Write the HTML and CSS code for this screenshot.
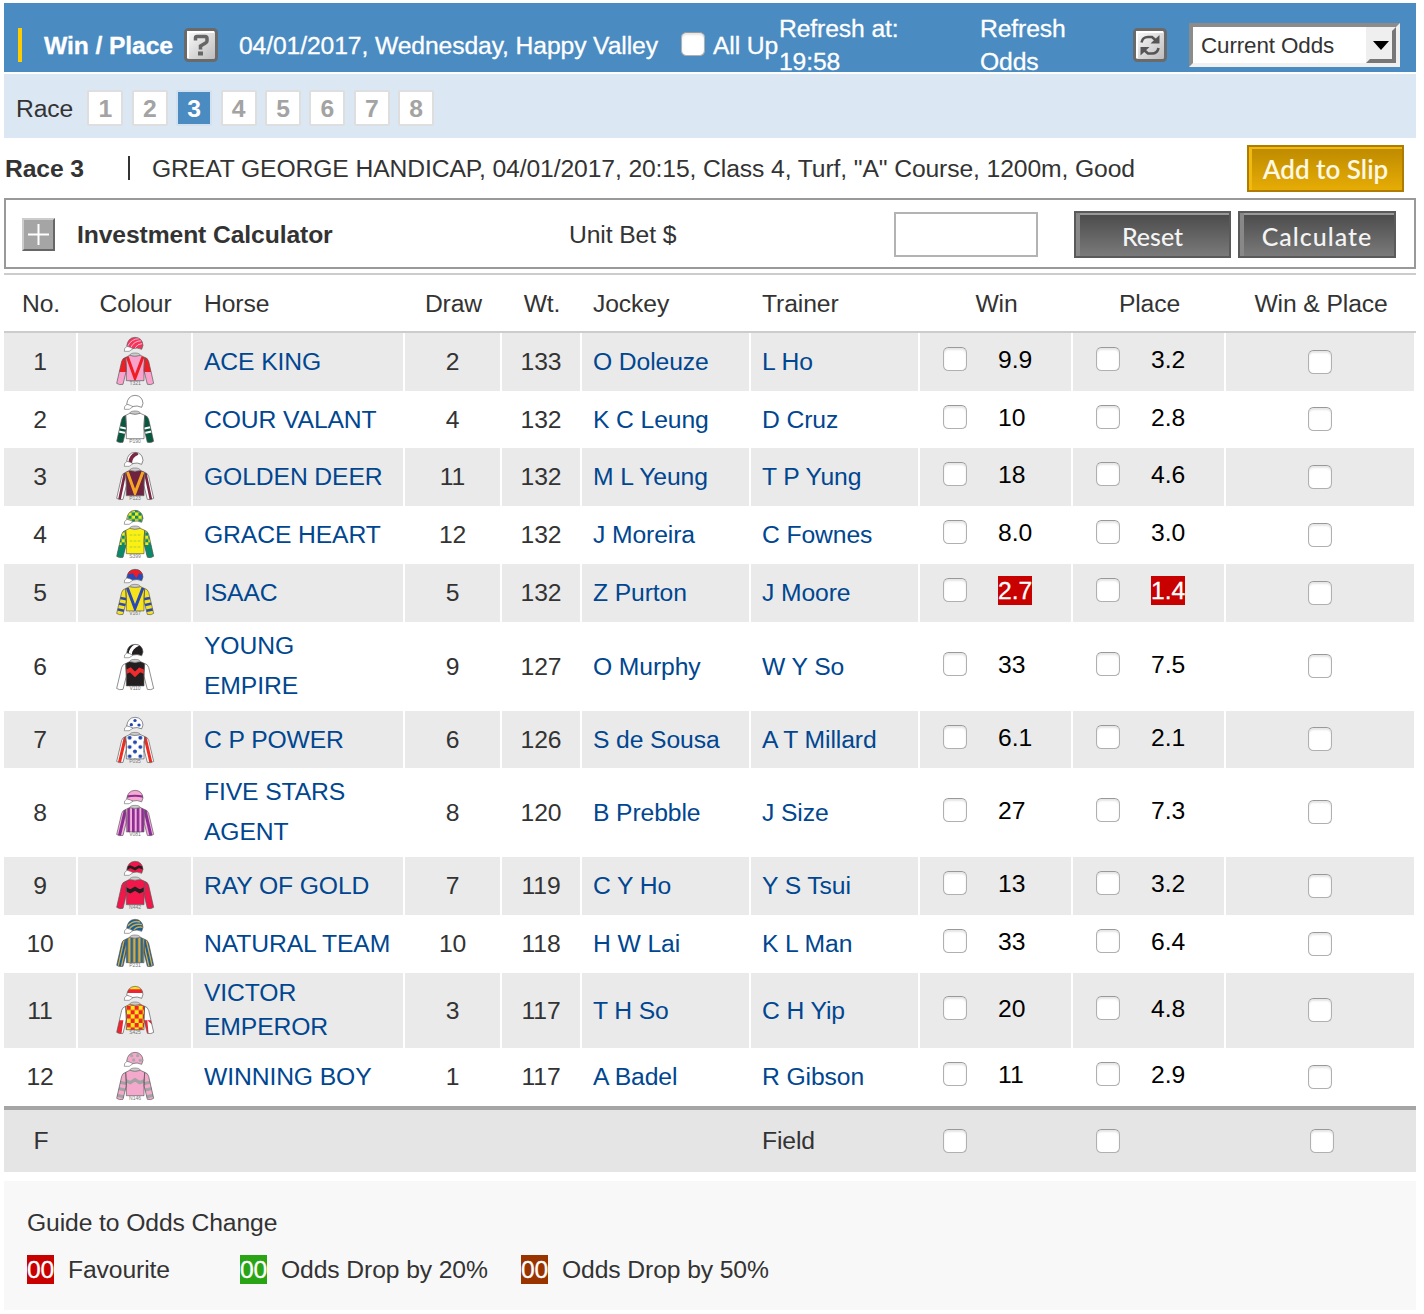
FILE: index.html
```html
<!DOCTYPE html>
<html lang="en">
<head>
<meta charset="utf-8">
<title>Win / Place</title>
<link rel="stylesheet" href="styles.css">
</head>
<body>
<svg class="defs" width="0" height="0" aria-hidden="true">
  <defs>
    <path id="p-body" d="M44 58L32 64L34 92L34 134L87 134L87 92L89 64L76 58Q60 63 44 58Z"/>
    <path id="p-left" d="M32 64Q23 66 20 76L5 142Q13 148 24 145L34 104Z"/>
    <path id="p-right" d="M89 64Q98 66 101 76L116 142Q108 148 97 145L87 104Z"/>
    <path id="p-cap" d="M35 31Q38 5 60 4Q82 5 84 28L80 40Q68 33 50 38Q42 33 35 31Z"/>
    <clipPath id="body"><use href="#p-body"/></clipPath>
    <clipPath id="left"><use href="#p-left"/></clipPath>
    <clipPath id="right"><use href="#p-right"/></clipPath>
    <clipPath id="arms"><use href="#p-left"/><use href="#p-right"/></clipPath>
    <clipPath id="cap"><use href="#p-cap"/></clipPath>
    <g id="outline" stroke="#555" stroke-width="2" fill="none" stroke-linejoin="round">
      <use href="#p-cap"/><use href="#p-left"/><use href="#p-right"/><use href="#p-body"/>
      <path fill="#fff" stroke="#777" d="M36 31Q26 36 28 46Q44 50 54 38Q46 33 36 31Z"/>
      <path fill="#ccc" stroke="#777" d="M44 58Q46 51 60 51Q74 51 76 58Q60 63 44 58Z"/>
    </g>
    <pattern id="check-green" width="20" height="20" patternUnits="userSpaceOnUse"><path fill="#f6ea14" d="M0 0h20v20H0z"/><path fill="#0b8a6b" d="M0 0h10v10H0zM10 10h10v10H10z"/></pattern>
    <pattern id="check-red" x="35" y="62" width="24" height="26" patternUnits="userSpaceOnUse"><path fill="#ffe814" d="M0 0h24v26H0z"/><path fill="#f0232c" d="M0 0h12v13H0zM12 13h12v13H12z"/></pattern>
    <pattern id="dots" x="34" y="60" width="32" height="29" patternUnits="userSpaceOnUse"><path fill="#fff" d="M0 0h32v29H0z"/><g fill="#2447b0"><circle cx="10" cy="8" r="6"/><circle cx="26" cy="22" r="6"/></g></pattern>
    <pattern id="stripe-purple" x="37" width="14" height="14" patternUnits="userSpaceOnUse"><path fill="#f4b0dc" d="M0 0h14v14H0z"/><path fill="#8c2d93" d="M0 0h8v14H0z"/></pattern>
    <pattern id="stripe-gold" x="34" width="15" height="15" patternUnits="userSpaceOnUse"><path fill="#15609c" d="M0 0h15v15H0z"/><path fill="#dba83c" d="M5 0h8v15H5z"/></pattern>
  </defs>
</svg>

<main class="page">
  <header class="topbar">
    <span class="accent"></span>
    <h1 class="title">Win / Place</h1>
    <svg class="tool" viewBox="0 0 34 34"><use href="#tool-frame"/>
      <defs>
        <linearGradient id="metal" x2="1" y2="1"><stop offset="0" stop-color="#fff"/><stop offset="1" stop-color="#b9b9b9"/></linearGradient>
        <g id="tool-frame"><rect x="1.500" y="1.500" width="31" height="31" rx="3" fill="url(#metal)" stroke="#6a6a6a" stroke-width="3"/><path d="M4 30V4h26" fill="none" stroke="#fff" stroke-width="2"/></g>
      </defs>
      <path d="M11.500 12.500V10q0-1.500 1.500-1.500h8q2 0 2 2v2.500q0 1.500-1.500 2L16.500 18v3.500" fill="none" stroke="#666" stroke-width="3.500"/><path fill="#666" d="M14 23.500h5v4h-5z"/>
    </svg>
    <span class="meeting">04/01/2017, Wednesday, Happy Valley</span>
    <input type="checkbox" class="box" aria-label="All Up"><span class="allup">All Up</span>
    <span class="refresh-time">Refresh at:<br>19:58</span>
    <span class="refresh-odds">Refresh<br>Odds</span>
    <svg class="tool" viewBox="0 0 34 34"><use href="#tool-frame"/>
      <g fill="none" stroke="#555" stroke-width="2.600"><path d="M8.500 14.500Q9.500 9 15 9H19L23 12.500"/><path d="M25.500 20Q24.500 25.500 19 25.500H15L11 22"/></g>
      <path fill="#555" d="M26.500 7v8.500H17.500zM7.500 27.500V19H16.500z"/>
    </svg>
    <div class="select"><span>Current Odds</span><span class="select-btn"><svg width="16" height="9" viewBox="0 0 16 9"><path d="M0 0h16L8 9z"/></svg></span></div>
  </header>

  <nav class="races">
    <span class="races-label">Race</span>
    <a class="race">1</a><a class="race">2</a><a class="race current">3</a><a class="race">4</a><a class="race">5</a><a class="race">6</a><a class="race">7</a><a class="race">8</a>
  </nav>

  <section class="info">
    <strong class="info-no">Race 3</strong><span class="info-rule"></span>
    <span class="info-text">GREAT GEORGE HANDICAP, 04/01/2017, 20:15, Class 4, Turf, "A" Course, 1200m, Good</span>
    <button class="btn gold">Add to Slip</button>
  </section>

  <section class="calc">
    <span class="plus"><svg width="21" height="21" viewBox="0 0 21 21"><path d="M10.500 0v21M0 10.500h21" stroke="#fff" stroke-width="2"/></svg></span>
    <strong class="calc-title">Investment Calculator</strong>
    <label class="calc-unit" for="unit">Unit Bet $</label>
    <input id="unit" class="unit-input" type="text">
    <button class="btn grey">Reset</button>
    <button class="btn grey calculate">Calculate</button>
  </section>

  <table class="odds">
    <colgroup><col class="c-no"><col class="c-colour"><col class="c-horse"><col class="c-draw"><col class="c-wt"><col class="c-name"><col class="c-name"><col class="c-win"><col class="c-place"><col class="c-wp"></colgroup>
    <thead>
      <tr><th>No.</th><th>Colour</th><th class="l">Horse</th><th>Draw</th><th>Wt.</th><th class="l">Jockey</th><th class="l">Trainer</th><th>Win</th><th>Place</th><th>Win &amp; Place</th></tr>
    </thead>
    <tbody>
      <tr class="alt h58"><td>1</td>
        <td><svg class="silk" viewBox="0 3 120 147" preserveAspectRatio="none"><g clip-path="url(#cap)"><path fill="#f5365c" d="M20 0h80v50H20z"/><path d="M38 30Q50 8 72 8M48 34Q56 15 80 14M60 36Q66 24 84 22" fill="none" stroke="#ffb9cf" stroke-width="3"/></g><g clip-path="url(#arms)"><path fill="#f01d25" d="M0 60h120v50H0z"/><path fill="#f8a2cc" d="M0 108h120v45H0z"/></g><g clip-path="url(#body)"><path fill="#f8a2cc" d="M30 55h60v85H30z"/><path d="M37 62L60 126L84 62" fill="none" stroke="#f01d25" stroke-width="9"/></g><use href="#outline"/><text x="60" y="148">T321</text></svg></td>
        <td class="l link">ACE KING</td><td>2</td><td>133</td><td class="l link">O Doleuze</td><td class="l link">L Ho</td>
        <td class="pick"><input type="checkbox" class="box"><b>9.9</b></td><td class="pick"><input type="checkbox" class="box"><b>3.2</b></td><td><input type="checkbox" class="box"></td></tr>
      <tr class="h57"><td>2</td>
        <td><svg class="silk" viewBox="0 3 120 147" preserveAspectRatio="none"><use href="#p-cap" fill="#fff"/><g clip-path="url(#arms)"><path fill="#07583f" d="M0 60h120v90H0z"/><path d="M8 98l28 6M8 112l28 6M113 98l-28 6M113 112l-28 6" stroke="#fff" stroke-width="6"/></g><use href="#p-body" fill="#fff"/><use href="#outline"/><text x="60" y="148">P190</text></svg></td>
        <td class="l link">COUR VALANT</td><td>4</td><td>132</td><td class="l link">K C Leung</td><td class="l link">D Cruz</td>
        <td class="pick"><input type="checkbox" class="box"><b>10</b></td><td class="pick"><input type="checkbox" class="box"><b>2.8</b></td><td><input type="checkbox" class="box"></td></tr>
      <tr class="alt h58"><td>3</td>
        <td><svg class="silk" viewBox="0 3 120 147" preserveAspectRatio="none"><g clip-path="url(#cap)"><path fill="#fff" d="M20 0h80v50H20z"/><path d="M46 38Q44 16 68 6" fill="none" stroke="#7c2746" stroke-width="11"/></g><g clip-path="url(#arms)"><path fill="#fff" d="M0 60h120v90H0z"/><path d="M30 66L13 147M91 66L108 147" stroke="#7c2746" stroke-width="8"/></g><g clip-path="url(#body)"><path fill="#6f2340" d="M30 55h60v85H30z"/><path d="M37 62L60 126L84 62" fill="none" stroke="#f5a623" stroke-width="9"/></g><use href="#outline"/><text x="60" y="148">P123</text></svg></td>
        <td class="l link">GOLDEN DEER</td><td>11</td><td>132</td><td class="l link">M L Yeung</td><td class="l link">T P Yung</td>
        <td class="pick"><input type="checkbox" class="box"><b>18</b></td><td class="pick"><input type="checkbox" class="box"><b>4.6</b></td><td><input type="checkbox" class="box"></td></tr>
      <tr class="h58"><td>4</td>
        <td><svg class="silk" viewBox="0 3 120 147" preserveAspectRatio="none"><use href="#p-cap" fill="url(#check-green)"/><g clip-path="url(#arms)"><path fill="url(#check-green)" d="M0 60h120v90H0z"/><path fill="#0b8a6b" d="M0 108h120v45H0z"/></g><use href="#p-body" fill="#faf014"/><path d="M44 78h8M56 78h8M68 78h8M44 96h8M56 96h8M68 96h8M44 114h8M56 114h8M68 114h8" stroke="#a8cf3a" stroke-width="3"/><use href="#outline"/><text x="60" y="148">S399</text></svg></td>
        <td class="l link">GRACE HEART</td><td>12</td><td>132</td><td class="l link">J Moreira</td><td class="l link">C Fownes</td>
        <td class="pick"><input type="checkbox" class="box"><b>8.0</b></td><td class="pick"><input type="checkbox" class="box"><b>3.0</b></td><td><input type="checkbox" class="box"></td></tr>
      <tr class="alt h58"><td>5</td>
        <td><svg class="silk short" viewBox="0 3 120 147" preserveAspectRatio="none"><g clip-path="url(#cap)"><path fill="#2a48b8" d="M20 0h80v50H20z"/><path fill="#ee1c25" d="M36 4h46l2 18-12-6-8 16-10-16-16 4z"/></g><g clip-path="url(#arms)"><path fill="#f7e31b" d="M0 60h120v90H0z"/><path d="M8 92l28 6M6 110l28 6M2 128l28 6M113 92l-28 6M115 110l-28 6M119 128l-28 6" stroke="#2a48b8" stroke-width="8"/></g><g clip-path="url(#body)"><path fill="#f7e31b" d="M30 55h60v85H30z"/><path d="M37 62L60 126L84 62" fill="none" stroke="#2a48b8" stroke-width="9"/></g><use href="#outline"/><text x="60" y="148">V167</text></svg></td>
        <td class="l link">ISAAC</td><td>5</td><td>132</td><td class="l link">Z Purton</td><td class="l link">J Moore</td>
        <td class="pick"><input type="checkbox" class="box"><b class="fav">2.7</b></td><td class="pick"><input type="checkbox" class="box"><b class="fav">1.4</b></td><td><input type="checkbox" class="box"></td></tr>
      <tr class="h89"><td>6</td>
        <td><svg class="silk short low" viewBox="0 3 120 147" preserveAspectRatio="none"><g clip-path="url(#cap)"><path fill="#231f20" d="M20 0h80v50H20z"/><path d="M46 38Q44 16 70 4" fill="none" stroke="#fff" stroke-width="10"/></g><g fill="#fff"><use href="#p-left"/><use href="#p-right"/></g><g clip-path="url(#body)"><path fill="#231f20" d="M30 55h60v85H30z"/><path d="M30 92L46 84L60 98L74 84L92 92" fill="none" stroke="#ef2b2d" stroke-width="13"/></g><use href="#outline"/><text x="60" y="148">V110</text></svg></td>
        <td class="l link tall">YOUNG<br>EMPIRE</td><td>9</td><td>127</td><td class="l link">O Murphy</td><td class="l link">W Y So</td>
        <td class="pick"><input type="checkbox" class="box"><b>33</b></td><td class="pick"><input type="checkbox" class="box"><b>7.5</b></td><td><input type="checkbox" class="box"></td></tr>
      <tr class="alt h57"><td>7</td>
        <td><svg class="silk short low" viewBox="0 3 120 147" preserveAspectRatio="none"><use href="#p-cap" fill="#fff"/><g fill="#2447b0"><circle cx="60" cy="14" r="5"/><circle cx="49" cy="27" r="5"/><circle cx="72" cy="28" r="5"/></g><g clip-path="url(#arms)"><path fill="#fff" d="M0 60h120v90H0z"/><path d="M31 66L13 147M90 66L108 147" stroke="#ef2b20" stroke-width="9"/></g><use href="#p-body" fill="url(#dots)"/><use href="#outline"/><text x="60" y="148">P035</text></svg></td>
        <td class="l link">C P POWER</td><td>6</td><td>126</td><td class="l link">S de Sousa</td><td class="l link">A T Millard</td>
        <td class="pick"><input type="checkbox" class="box"><b>6.1</b></td><td class="pick"><input type="checkbox" class="box"><b>2.1</b></td><td><input type="checkbox" class="box"></td></tr>
      <tr class="h89"><td>8</td>
        <td><svg class="silk short low" viewBox="0 3 120 147" preserveAspectRatio="none"><g clip-path="url(#cap)"><path fill="#f6a9d2" d="M20 0h80v50H20z"/><path d="M34 24Q60 18 86 24" fill="none" stroke="#8c2d93" stroke-width="7"/></g><g clip-path="url(#arms)"><path fill="#f4b0dc" d="M0 60h120v90H0z"/><path d="M31 66L13 147M90 66L108 147" stroke="#8c2d93" stroke-width="9"/></g><use href="#p-body" fill="url(#stripe-purple)"/><use href="#outline"/><text x="60" y="148">V081</text></svg></td>
        <td class="l link tall">FIVE STARS<br>AGENT</td><td>8</td><td>120</td><td class="l link">B Prebble</td><td class="l link">J Size</td>
        <td class="pick"><input type="checkbox" class="box"><b>27</b></td><td class="pick"><input type="checkbox" class="box"><b>7.3</b></td><td><input type="checkbox" class="box"></td></tr>
      <tr class="alt h58"><td>9</td>
        <td><svg class="silk" viewBox="0 3 120 147" preserveAspectRatio="none"><g clip-path="url(#cap)"><path fill="#f2174b" d="M20 0h80v50H20z"/><path d="M32 26L46 20L60 27L72 20L88 26" fill="none" stroke="#231f20" stroke-width="8"/></g><g fill="#f2174b"><use href="#p-left"/><use href="#p-right"/></g><g clip-path="url(#body)"><path fill="#f2174b" d="M30 55h60v85H30z"/><path d="M30 86L46 94L60 86L74 94L92 86" fill="none" stroke="#231f20" stroke-width="11"/></g><use href="#outline"/><text x="60" y="148">N442</text></svg></td>
        <td class="l link">RAY OF GOLD</td><td>7</td><td>119</td><td class="l link">C Y Ho</td><td class="l link">Y S Tsui</td>
        <td class="pick"><input type="checkbox" class="box"><b>13</b></td><td class="pick"><input type="checkbox" class="box"><b>3.2</b></td><td><input type="checkbox" class="box"></td></tr>
      <tr class="h58"><td>10</td>
        <td><svg class="silk" viewBox="0 3 120 147" preserveAspectRatio="none"><g clip-path="url(#cap)"><path fill="#15609c" d="M20 0h80v50H20z"/><path d="M38 24Q54 6 76 12M42 34Q56 14 84 20M56 38Q64 24 84 28" fill="none" stroke="#c9aa55" stroke-width="4"/></g><g clip-path="url(#arms)"><path fill="#15609c" d="M0 60h120v90H0z"/><path d="M27 66L9 147M35 76L19 147M94 66L112 147M86 76L102 147" stroke="#dba83c" stroke-width="4"/></g><use href="#p-body" fill="url(#stripe-gold)"/><use href="#outline"/><text x="60" y="148">P231</text></svg></td>
        <td class="l link">NATURAL TEAM</td><td>10</td><td>118</td><td class="l link">H W Lai</td><td class="l link">K L Man</td>
        <td class="pick"><input type="checkbox" class="box"><b>33</b></td><td class="pick"><input type="checkbox" class="box"><b>6.4</b></td><td><input type="checkbox" class="box"></td></tr>
      <tr class="alt h75"><td>11</td>
        <td><svg class="silk" viewBox="0 3 120 147" preserveAspectRatio="none"><g clip-path="url(#cap)"><path fill="#fff" d="M20 0h80v50H20z"/><path fill="#ffe114" d="M20 0h80v14H20z"/><path fill="#ee2430" d="M20 13h80v11H20z"/></g><g clip-path="url(#arms)"><path fill="#fff" d="M0 60h120v90H0z"/><path fill="#ee2430" d="M0 106h25l-6 44H0zM86 106h11l4 44H86zM97 106h23v20z"/></g><use href="#p-body" fill="url(#check-red)"/><use href="#outline"/><text x="60" y="148">S425</text></svg></td>
        <td class="l link mid">VICTOR<br>EMPEROR</td><td>3</td><td>117</td><td class="l link">T H So</td><td class="l link">C H Yip</td>
        <td class="pick"><input type="checkbox" class="box"><b>20</b></td><td class="pick"><input type="checkbox" class="box"><b>4.8</b></td><td><input type="checkbox" class="box"></td></tr>
      <tr class="h58"><td>12</td>
        <td><svg class="silk" viewBox="0 3 120 147" preserveAspectRatio="none"><use href="#p-cap" fill="#f4a9cc"/><g fill="#a9a9a9"><circle cx="50" cy="14" r="5"/><circle cx="56" cy="27" r="5"/><circle cx="68" cy="14" r="5"/><circle cx="76" cy="28" r="5"/></g><g clip-path="url(#arms)"><path fill="#f4a9cc" d="M0 60h120v90H0z"/><path d="M8 92l28 6M6 112l28 6M2 132l28 6M113 92l-28 6M115 112l-28 6M119 132l-28 6" stroke="#a3a3a3" stroke-width="9"/></g><g clip-path="url(#body)"><path fill="#f4a9cc" d="M30 55h60v85H30z"/><path d="M30 88L46 95L60 86L74 95L92 88" fill="none" stroke="#a3a3a3" stroke-width="10"/></g><use href="#outline"/><text x="60" y="148">N146</text></svg></td>
        <td class="l link">WINNING BOY</td><td>1</td><td>117</td><td class="l link">A Badel</td><td class="l link">R Gibson</td>
        <td class="pick"><input type="checkbox" class="box"><b>11</b></td><td class="pick"><input type="checkbox" class="box"><b>2.9</b></td><td><input type="checkbox" class="box"></td></tr>
    </tbody>
    <tfoot>
      <tr><td>F</td><td colspan="5"></td><td class="l">Field</td><td class="pick"><input type="checkbox" class="box"></td><td class="pick"><input type="checkbox" class="box"></td><td><input type="checkbox" class="box"></td></tr>
    </tfoot>
  </table>

  <section class="guide">
    <p>Guide to Odds Change</p>
    <ul class="keys">
      <li class="key-fav"><span class="chip fav">00</span>Favourite</li>
      <li class="key-20"><span class="chip drop20">00</span>Odds Drop by 20%</li>
      <li><span class="chip drop50">00</span>Odds Drop by 50%</li>
    </ul>
  </section>
</main>
</body>
</html>
```
FILE: styles.css
```css
* { box-sizing: border-box; }
body {
  margin: 0;
  background: #fff;
  color: #333;
  font: 24.7px/33px "Liberation Sans", Arial, sans-serif;
  letter-spacing: -.11px;
}
.defs { position: absolute; }
.page { width: 1412px; margin: 3px 0 0 4px; }

.box {
  appearance: none;
  display: block;
  flex: none;
  width: 24px;
  height: 24px;
  margin: 0;
  border: 1px solid #b0b0b0;
  border-top-color: #999;
  border-radius: 5.5px;
  background: #fff;
  box-shadow: inset 0 2px 2px #e6e6e6;
}

/* Top bar */
.topbar {
  display: flex;
  align-items: flex-start;
  height: 69px;
  padding: 15px 16px 0 14px;
  background: #4a8bc2;
  color: #fff;
  white-space: nowrap;
  -webkit-text-stroke: .3px;
}
.accent { width: 4px; height: 34px; margin-top: 10px; background: #fc0; }
.title { width: 140px; margin: 11px 0 0 22px; font-size: inherit; line-height: 33px; }
.tool { width: 34px; height: 34px; margin-top: 10px; flex: none; }
.meeting { width: 442px; margin: 11px 0 0 21px; }
.topbar .box { margin-top: 14px; }
.allup { width: 66px; margin: 11px 0 0 8px; }
.refresh-time { width: 201px; margin-top: -6px; }
.refresh-odds { width: 153px; margin-top: -6px; }
.select {
  display: flex;
  width: 211px;
  height: 44px;
  margin: 5px 0 0 auto;
  border: 4px solid;
  border-color: #8b8b8b #f0f0f0 #f0f0f0 #8b8b8b;
  background: #fff;
  color: #333;
  font-size: 22.4px;
  line-height: 37px;
  -webkit-text-stroke: 0;
}
.select > span:first-child { flex: 1; padding-left: 8px; }
.select-btn {
  display: flex;
  align-items: center;
  justify-content: center;
  width: 30px;
  border: 4px solid;
  border-color: #efefef #777 #777 #efefef;
  background: #efefef;
}

/* Race tabs */
.races {
  display: flex;
  align-items: center;
  gap: 8.4px;
  height: 64px;
  margin-top: 2px;
  padding: 4px 0 0 12px;
  background: #dbe7f3;
}
.races-label { width: 63px; }
.race {
  width: 36px;
  height: 36px;
  border: 2px solid #dedede;
  border-radius: 2px;
  background: #fff;
  color: #a3a3a3;
  font-weight: bold;
  line-height: 34px;
  text-align: center;
}
.race.current { border-color: #d3e1ef; background: #4a8bc2; color: #fff; }

/* Race summary */
.info { display: flex; align-items: center; height: 60px; padding: 0 12px 0 1px; }
.info-no { width: 123px; }
.info-rule { width: 2px; height: 24px; background: #333; }
.info-text { margin-left: 22px; white-space: nowrap; }
.btn {
  width: 157px;
  height: 47px;
  padding: 2px 0 0;
  border: 2px solid;
  color: #f4f4f4;
  font: 500 25px/38px Lato, sans-serif;
  text-align: center;
}
.gold {
  margin-left: auto;
  border-color: #b07c00;
  background: linear-gradient(#bd8a00, #e6ac05);
  box-shadow: inset 3px 2px #f2b90e;
  color: #fff8e2;
  font-size: 26px;
  font-weight: 600;
}
.grey {
  border-color: #5a5a5a;
  background: linear-gradient(#4a4a4a, #7a7a7a);
  box-shadow: inset 4px 0 #888, inset 0 2px #999;
}

/* Investment calculator */
.calc {
  display: flex;
  align-items: center;
  height: 71px;
  padding: 2px 0 0 16px;
  border: 2px solid #999;
}
.plus {
  display: flex;
  align-items: center;
  justify-content: center;
  width: 33px;
  height: 33px;
  border: 2px solid;
  border-color: #ccc #666 #666 #ccc;
  background: #a5a5a5;
}
.calc-title { width: 492px; margin-left: 22px; }
.calc-unit { width: 325px; }
.unit-input { width: 144px; height: 45px; border: 2px solid #b3b3b3; }
.calc .grey { margin-left: 36px; }
.calc .calculate { width: 158px; margin-left: 7px; letter-spacing: 1px; }

/* Odds table */
.odds { width: 1412px; margin-top: 4px; border-collapse: separate; border-spacing: 0; table-layout: fixed; }
.c-no { width: 74px; }
.c-colour { width: 115px; }
.c-horse { width: 212px; }
.c-draw { width: 97px; }
.c-wt { width: 80px; }
.c-name { width: 169px; }
.c-win { width: 153px; }
.c-place { width: 153px; }
.c-wp { width: 190px; }
.odds th {
  height: 60px;
  padding: 0;
  border-top: 2px solid #ccc;
  border-bottom: 2px solid #ccc;
  font-weight: normal;
}
.odds td { padding: 0 0 1px; border-right: 2px solid #fff; text-align: center; vertical-align: middle; }
.odds .l { padding-left: 11px; text-align: left; white-space: nowrap; }
.odds .alt td { background: #eaeaea; }
.h57 { height: 57px; }
.h58 { height: 58px; }
.h75 { height: 75px; }
.h89 { height: 89px; }
.link { color: #004690; }
.tall { line-height: 40px; }
.mid { line-height: 34px; }
.odds td > .box { margin: 0 auto; }
.odds td.pick { padding: 0 0 6px 23px; color: #000; }
.odds td.pick .box { float: left; margin: 3px 31px 0 0; }
.pick b { float: left; margin-top: 1px; font-weight: normal; line-height: 29px; letter-spacing: 0; }
.pick::after { content: ""; display: block; clear: both; }
.fav, .chip { color: #fff; -webkit-text-stroke: .3px; }
.fav { background: #c80000; }
.drop20 { background: #28a414; }
.drop50 { background: #993300; }
.silk { display: block; width: 40px; height: 49px; margin: 0 auto; overflow: visible; }
.silk.short { height: 47px; }
.silk.low { transform: translateY(1px); }
.silk text { fill: #777; font-size: 15px; text-anchor: middle; }
.odds tfoot td { height: 66px; border-top: 4px solid #a5a5a5; border-right: 0; background: #e5e5e5; }
.odds tfoot td:last-child { padding-left: 1px; }
.odds tfoot td.pick { padding-bottom: 1px; }
.odds tfoot td.pick .box { margin-top: 0; }

/* Legend */
.guide { height: 129px; margin-top: 9px; padding: 25px 23px 0; background: #f8f8f8; }
.guide p { margin: 0; }
.keys { display: flex; margin: 14px 0 0; padding: 0; list-style: none; }
.keys li { display: flex; align-items: center; }
.key-fav { width: 213px; }
.key-20 { width: 281px; }
.chip { width: 27px; margin-right: 14px; line-height: 29px; }
```
